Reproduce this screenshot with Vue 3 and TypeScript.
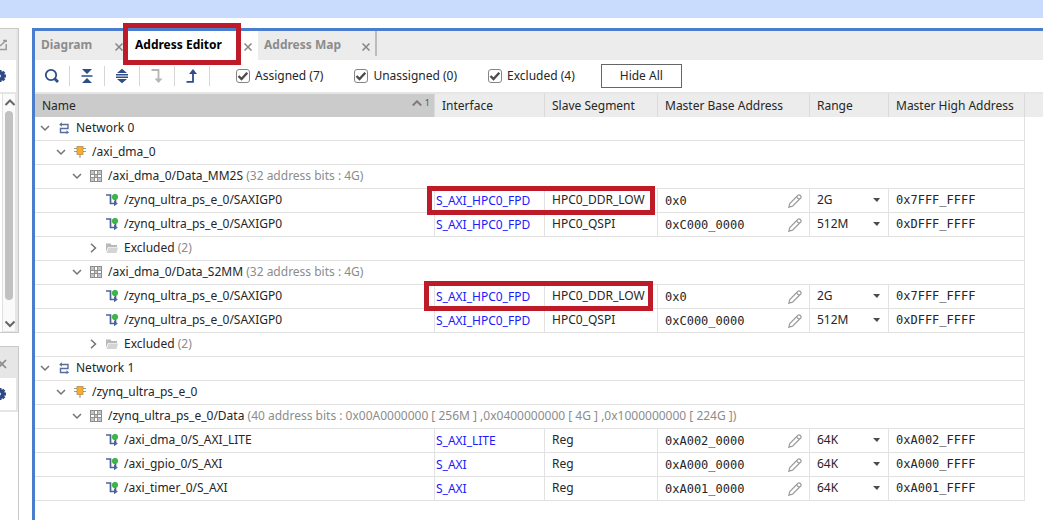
<script setup lang="ts">
import { ref } from 'vue'

type Kind = 'network' | 'block' | 'space' | 'segment' | 'folder'

interface Row {
  level: number
  kind: Kind
  name: string
  note?: string
  iface?: string
  seg?: string
  base?: string
  range?: string
  high?: string
}

const leaf = (name: string, iface: string, seg: string, base: string, range: string, high: string): Row => ({
  level: 3, kind: 'segment', name, iface, seg, base, range, high,
})

const ps = '/zynq_ultra_ps_e_0/SAXIGP0'
const hpc = 'S_AXI_HPC0_FPD'

const rows: Row[] = [
  { level: 0, kind: 'network', name: 'Network 0' },
  { level: 1, kind: 'block', name: '/axi_dma_0' },
  { level: 2, kind: 'space', name: '/axi_dma_0/Data_MM2S', note: '(32 address bits : 4G)' },
  leaf(ps, hpc, 'HPC0_DDR_LOW', '0x0', '2G', '0x7FFF_FFFF'),
  leaf(ps, hpc, 'HPC0_QSPI', '0xC000_0000', '512M', '0xDFFF_FFFF'),
  { level: 3, kind: 'folder', name: 'Excluded', note: '(2)' },
  { level: 2, kind: 'space', name: '/axi_dma_0/Data_S2MM', note: '(32 address bits : 4G)' },
  leaf(ps, hpc, 'HPC0_DDR_LOW', '0x0', '2G', '0x7FFF_FFFF'),
  leaf(ps, hpc, 'HPC0_QSPI', '0xC000_0000', '512M', '0xDFFF_FFFF'),
  { level: 3, kind: 'folder', name: 'Excluded', note: '(2)' },
  { level: 0, kind: 'network', name: 'Network 1' },
  { level: 1, kind: 'block', name: '/zynq_ultra_ps_e_0' },
  { level: 2, kind: 'space', name: '/zynq_ultra_ps_e_0/Data', note: '(40 address bits : 0x00A0000000 [ 256M ] ,0x0400000000 [ 4G ] ,0x1000000000 [ 224G ])' },
  leaf('/axi_dma_0/S_AXI_LITE', 'S_AXI_LITE', 'Reg', '0xA002_0000', '64K', '0xA002_FFFF'),
  leaf('/axi_gpio_0/S_AXI', 'S_AXI', 'Reg', '0xA000_0000', '64K', '0xA000_FFFF'),
  leaf('/axi_timer_0/S_AXI', 'S_AXI', 'Reg', '0xA001_0000', '64K', '0xA001_FFFF'),
]

const filters = ref([
  { id: 'assigned', label: 'Assigned (7)', on: true },
  { id: 'unassigned', label: 'Unassigned (0)', on: true },
  { id: 'excluded', label: 'Excluded (4)', on: true },
])
</script>

<template>
  <div class="page">
    <div class="band"></div>
    <div class="body">
      <aside class="side">
        <section class="panel upper">
          <div class="panel-head">
            <button class="plain" aria-label="Float">
              <svg width="18" height="30" viewBox="0 0 18 30" fill="none" stroke="#9a9a9a" stroke-width="1.500"><path d="M-2 20.500H6.200V15M6.200 13V11.500H3M0 17L5.500 12" /></svg>
            </button>
          </div>
          <div class="panel-tools">
            <button class="plain" aria-label="Settings">
              <svg width="18" height="32" viewBox="0 0 18 32"><circle cx="0" cy="16" r="3.300" fill="none" stroke="#2c4a86" stroke-width="3" /><path d="M0 10v12M-6 16H6M-4.300 11.700L4.300 20.300M-4.300 20.300L4.300 11.700" stroke="#2c4a86" stroke-width="3" /><circle cx="-1" cy="16" r="1.800" fill="#fff" /></svg>
            </button>
          </div>
          <div class="scroll">
            <svg width="14" height="17" viewBox="0 0 14 17" fill="none" stroke="#666" stroke-width="2"><path d="M2.500 11L7 6.500L11.500 11" /></svg>
            <div class="thumb"></div>
            <svg width="14" height="17" viewBox="0 0 14 17" fill="none" stroke="#666" stroke-width="2"><path d="M2.500 7.500L7 12L11.500 7.500" /></svg>
          </div>
        </section>
        <section class="panel lower">
          <div class="panel-head">
            <button class="plain" aria-label="Close panel">
              <svg width="18" height="31" viewBox="0 0 18 31" stroke="#8a8a8a" stroke-width="1.700"><path d="M-2 13L6 21M-2 21L6 13" /></svg>
            </button>
          </div>
          <div class="panel-tools">
            <button class="plain" aria-label="Settings">
              <svg width="18" height="32" viewBox="0 0 18 32"><circle cx="0" cy="16" r="3.300" fill="none" stroke="#2c4a86" stroke-width="3" /><path d="M0 10v12M-6 16H6M-4.300 11.700L4.300 20.300M-4.300 20.300L4.300 11.700" stroke="#2c4a86" stroke-width="3" /><circle cx="-1" cy="16" r="1.800" fill="#fff" /></svg>
            </button>
          </div>
        </section>
      </aside>

      <main class="editor">
        <div class="tabs">
          <div v-for="(t, i) in ['Diagram', 'Address Editor', 'Address Map']" :key="t" class="tab" :class="['t' + i, { active: i === 1 }]">
            <button class="plain title">{{ t }}</button>
            <button class="plain close" :aria-label="'Close ' + t">
              <svg width="8" height="8" viewBox="0 0 8 8" stroke="#858585" stroke-width="1.500"><path d="M.5 .5L7.500 7.500M.5 7.500L7.500 .5" /></svg>
            </button>
          </div>
          <div class="tab-end"></div>
        </div>

        <div class="toolbar">
          <button class="plain tool" aria-label="Search">
            <svg width="16" height="16" viewBox="0 0 16 16" fill="none" stroke="#2f4d87"><circle cx="7" cy="7" r="5.200" stroke-width="1.800" /><path d="M10.500 10.500L14 14" stroke-width="2.800" /></svg>
          </button>
          <button class="plain tool" aria-label="Collapse all">
            <svg width="16" height="16" viewBox="0 0 16 16" fill="#2f4d87"><path d="M3 1H13L8 6ZM3 15H13L8 10ZM2.500 7.200H13.500V8.800H2.500Z" /></svg>
          </button>
          <button class="plain tool" aria-label="Expand all">
            <svg width="16" height="16" viewBox="0 0 16 16" fill="#2f4d87"><path d="M8 .8L13 5H3ZM8 15.200L13 11H3ZM2 6H14V7.500H2ZM2 8.600H14V10.100H2Z" /></svg>
          </button>
          <button class="plain tool" aria-label="Assign" disabled>
            <svg width="16" height="16" viewBox="0 0 16 16"><path d="M2.500 2H9.500V12" fill="none" stroke="#b5b5b5" stroke-width="1.800" /><path d="M5.500 10.500H13.500L9.500 15Z" fill="#b5b5b5" /></svg>
          </button>
          <button class="plain tool" aria-label="Unassign">
            <svg width="16" height="16" viewBox="0 0 16 16"><path d="M2.500 13.900H9V4" fill="none" stroke="#2f4d87" stroke-width="1.800" /><path d="M5 6H13L9 1Z" fill="#2f4d87" /></svg>
          </button>
          <div class="filters">
            <label v-for="f in filters" :key="f.id" class="filter" :class="f.id">
              <span class="tick">
                <input v-model="f.on" type="checkbox" />
                <svg v-if="f.on" width="14" height="14" viewBox="0 0 14 14" fill="none" stroke="#4c4c4c" stroke-width="2.400"><path d="M2.500 7L5.500 10L11.300 3.800" /></svg>
              </span>{{ f.label }}
            </label>
            <button class="hide">Hide All</button>
          </div>
        </div>

        <div class="grid">
          <table>
            <colgroup>
              <col class="c-name" /><col class="c-if" /><col class="c-seg" /><col class="c-base" /><col class="c-range" /><col class="c-high" />
            </colgroup>
            <thead>
              <tr>
                <th class="sorted">
                  <div class="sort-head"><span>Name</span>
                    <span class="sort"><svg width="10" height="6" viewBox="0 0 10 6" fill="none" stroke="#7d7d7d" stroke-width="2"><path d="M.8 5.500L5 1.300L9.200 5.500" /></svg>1</span>
                  </div>
                </th>
                <th>Interface</th><th>Slave Segment</th><th>Master Base Address</th><th>Range</th><th>Master High Address</th>
              </tr>
            </thead>
            <tbody>
              <tr v-for="(r, i) in rows" :key="i">
                <td :colspan="r.kind === 'segment' ? 1 : 6" class="name">
                  <div class="node" :class="'l' + r.level">
                    <button v-if="r.kind !== 'segment'" class="plain twist" :aria-label="'Toggle ' + r.name">
                      <svg width="10" height="10" viewBox="0 0 10 10" fill="none" stroke="#737373" stroke-width="1.500"><path v-if="r.kind === 'folder'" d="M3 .8L7.500 5L3 9.200" /><path v-else d="M1 3L5 7L9 3" /></svg>
                    </button>
                    <span v-else class="twist"></span>
                    <svg v-if="r.kind === 'network'" class="ico" width="12" height="12" viewBox="0 0 12 12" fill="none" stroke="#5a6d97" stroke-width="1.400"><path d="M3 2.500H10V6.500H2.500V10.500H9" /><path d="M3.800 .3L1.200 2.500L3.800 4.700ZM8.500 8.300L11.200 10.500L8.500 12Z" fill="#5a6d97" stroke="none" /></svg>
                    <svg v-else-if="r.kind === 'block'" class="ico" width="12" height="12" viewBox="0 0 12 12"><path d="M0 2.500H12M0 5.500H12M6 8V12" stroke="#9a9a9a" stroke-width="1.200" /><rect x="3" y=".5" width="6" height="8" fill="#f9ac2b" stroke="#b69052" stroke-width=".8" /></svg>
                    <svg v-else-if="r.kind === 'space'" class="ico" width="12" height="12" viewBox="0 0 12 12"><path d="M0 0H12V12H0Z" fill="#8f8f8f" /><path d="M1 1H4V4H1ZM5 5H7V7H5ZM8 1H11V4H8ZM1 8H4V11H1ZM8 8H11V11H8Z" fill="#c4c4c4" /><path d="M5 1H7V4H5ZM1 5H4V7H1ZM8 5H11V7H8ZM5 8H7V11H5Z" fill="#fff" /></svg>
                    <svg v-else-if="r.kind === 'segment'" class="ico" width="12" height="12" viewBox="0 0 12 12"><path d="M0 1H4.500V9.500H9M9.500 4V8" fill="none" stroke="#4d6398" stroke-width="1.700" /><path d="M8 6.500L11.800 9.500L8 12.300Z" fill="#4d6398" /><circle cx="9" cy="3" r="3.100" fill="#3fb449" /></svg>
                    <svg v-else class="ico" width="12" height="12" viewBox="0 0 12 12"><path d="M0 1.500H4.500L5.500 3H11V5H2L0 10Z" fill="#b9b9b9" /><path d="M2.700 5.600H12L10.500 11H.5Z" fill="#d4d4d4" /></svg>
                    <span>{{ r.name }} <span v-if="r.note" class="note">{{ r.note }}</span></span>
                  </div>
                </td>
                <template v-if="r.kind === 'segment'">
                  <td class="iface"><a href="#">{{ r.iface }}</a></td>
                  <td>{{ r.seg }}</td>
                  <td class="hex">
                    <div class="edit"><span>{{ r.base }}</span>
                      <button class="plain" aria-label="Edit base address">
                        <svg width="14" height="14" viewBox="0 0 14 14" fill="none" stroke="#9c9c9c" stroke-width="1.200"><path d="M.8 13.200L1.800 9.500L10 1.300Q11 .4 12 1.300L12.700 2Q13.600 3 12.700 4L4.500 12.200ZM8.500 2.800L11.200 5.500" /></svg>
                      </button>
                    </div>
                  </td>
                  <td>
                    <div class="range">
                      <select aria-label="Range"><option>{{ r.range }}</option></select>
                      <svg width="7" height="4" viewBox="0 0 7 4"><path d="M0 0H7L4 4Z" fill="#4b4b4b" /></svg>
                    </div>
                  </td>
                  <td class="hex">{{ r.high }}</td>
                </template>
              </tr>
            </tbody>
          </table>
        </div>
        <div class="mark m-tab"></div>
        <div class="mark m-first"></div>
        <div class="mark m-second"></div>
      </main>
    </div>
  </div>
</template>

<style>
body { margin: 0; background: #fff; }
</style>

<style scoped>
* { box-sizing: border-box; }
.page { min-height: 100vh; display: flex; flex-direction: column; overflow: hidden; font: 12px/16px "Noto Sans", sans-serif; color: #262626; }
.band { height: 18px; background: #cadcfe; margin-bottom: 10px; flex: none; }
.body { flex: 1; display: flex; gap: 13px; }
svg { display: block; flex: none; }
.plain { display: block; margin: 0; padding: 0; border: 0; background: none; font: inherit; color: inherit; }

.side { width: 19px; flex: none; display: flex; flex-direction: column; gap: 13px; }
.panel { border: 1px solid #c9c9c9; border-left: 0; background: #fff; display: flex; flex-direction: column; }
.upper { height: 305px; }
.lower { flex: 1; border-bottom: 0; }
.panel-head { height: 31px; background: #ececec; border-right: 2px solid #e6e6e6; overflow: hidden; }
.lower .panel-head { background: #e6e6e6; }
.panel-tools { height: 34px; border-bottom: 2px solid #e6e6e6; border-right: 2px solid #e6e6e6; overflow: hidden; }
.scroll { flex: 1; display: flex; flex-direction: column; margin-left: 2px; border-left: 1px solid #e0e0e0; border-right: 3px solid #e6e6e6; border-bottom: 1px solid #e6e6e6; background: #fafafa; }
.thumb { flex: 1; margin: 0 2px 14px; border-radius: 4px; background: #c1c1c1; }

.editor { flex: 1; position: relative; border: solid #4a7dcd; border-width: 3px 0 0 3px; min-width: 0; }
.tabs { height: 29px; background: #ececec; display: flex; }
.tab { display: flex; align-items: center; justify-content: space-between; font-weight: 700; color: #8c8c8c; padding: 0 6px; }
.tab .title { padding-bottom: 2px; }
.tab .close { padding-top: 2px; }
.t0 { width: 93px; border-right: 1px solid #bcbcbc; padding-right: 4px; }
.t1 { width: 130px; padding-left: 7px; }
.t2 { width: 117px; padding-right: 5px; }
.active { background: #fff; color: #000; }
.tab-end { width: 2px; height: 25px; background: #bcbcbc; }

.toolbar { height: 32px; display: flex; align-items: center; }
.tool { width: 35px; height: 20px; border-right: 1px solid #d6d6d6; display: flex; align-items: center; justify-content: center; }
.filters { display: flex; align-items: center; margin-left: 26px; }
.filter { display: flex; align-items: center; gap: 5px; margin-right: 31px; }
.excluded { margin-right: 26px; }
.tick { position: relative; width: 14px; height: 14px; }
.tick input { appearance: none; display: block; width: 14px; height: 14px; margin: 0; border: 1px solid #858585; border-radius: 3px; background: #fff; }
.tick svg { position: absolute; inset: 0; pointer-events: none; }
.hide { width: 81px; height: 24px; padding: 0; border: 1px solid #666; background: #fff; font: inherit; color: inherit; }

.grid { border-top: 2px solid #e6e6e6; background: linear-gradient(#ececec 23px, transparent 23px); }
table { table-layout: fixed; width: 990px; border-collapse: separate; border-spacing: 0; }
.c-name { width: 400px; }
.c-if { width: 110px; }
.c-seg { width: 113px; }
.c-base { width: 152px; }
.c-range { width: 79px; }
.c-high { width: 136px; }
th { height: 23px; padding: 0 0 0 7px; text-align: left; font-weight: 400; border-right: 1px solid #dadada; white-space: nowrap; }
.sorted { background: #cbcbcb; }
.sort-head { display: flex; justify-content: space-between; }
.sort { display: flex; align-items: center; gap: 3px; padding-right: 4px; padding-bottom: 6px; font-size: 9px; line-height: 10px; color: #555; }
td { height: 24px; padding: 0 0 1px 7px; border: solid #e2e2e2; border-width: 0 1px 1px 0; white-space: nowrap; }
.name { padding-left: 0; padding-bottom: 0; }
.node { display: flex; align-items: center; gap: 6px; padding: 0 0 1px 5px; }
.l1 { padding-left: 21px; }
.l2 { padding-left: 37px; }
.l3 { padding-left: 53px; }
.twist { width: 12px; }
.note { color: #8c8c8c; }
.iface { padding: 1px 0 0 1px; }
.iface a { color: #1a1aff; text-decoration: none; }
.hex { font-family: "DejaVu Sans Mono", monospace; }
.edit { display: flex; align-items: center; justify-content: space-between; padding: 1px 7px 0 0; }
.range { display: flex; align-items: center; position: relative; }
.range select { appearance: none; width: 100%; height: 16px; margin: 0; padding: 0; border: 0; background: none; font: inherit; color: inherit; }
.range svg { position: absolute; right: 8px; top: 6px; pointer-events: none; }

.mark { position: absolute; border: 5px solid #bf1a28; pointer-events: none; }
.m-tab { left: 88px; top: -8px; width: 118px; height: 42px; }
.m-first { left: 392px; top: 155px; width: 228px; height: 29px; }
.m-second { left: 389px; top: 250px; width: 229px; height: 30px; }
</style>
